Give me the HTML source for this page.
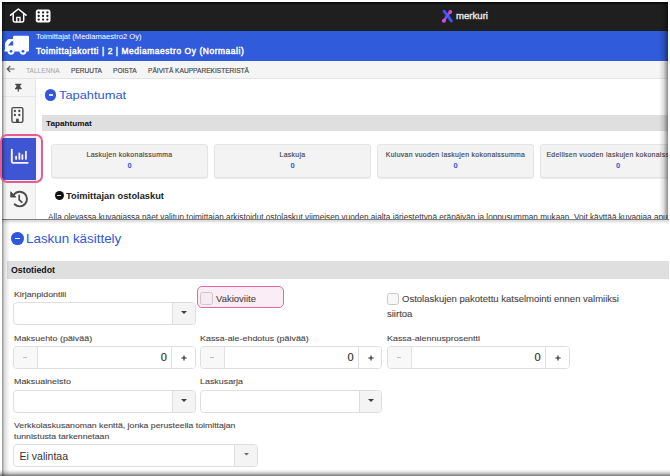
<!DOCTYPE html>
<html><head><meta charset="utf-8">
<style>
*{margin:0;padding:0;box-sizing:border-box}
html,body{width:670px;height:476px;overflow:hidden;background:#fff;font-family:"Liberation Sans",sans-serif;color:#333}
.a{position:absolute}
.t{position:absolute;white-space:nowrap;line-height:1}
#up{position:absolute;left:2px;top:2px;width:666px;height:217px;overflow:hidden;background:#fff}
#upi{position:absolute;left:-2px;top:-2px;width:700px;height:240px}
#lo{position:absolute;left:2px;top:219px;width:666.5px;height:257px;overflow:hidden;background:#fff}
#loi{position:absolute;left:-2px;top:-219px;width:700px;height:500px}
</style></head><body>

<div id="up"><div id="upi">
  <!-- dark top bar -->
  <div class="a" style="left:0;top:0;width:700px;height:31px;background:#1f1f1f"></div>
  <div class="a" style="left:0;top:2px;width:700px;height:1.6px;background:#0e0e0e"></div>
  <!-- home icon -->
  <svg class="a" style="left:0;top:0" width="60" height="31" viewBox="0 0 60 31">
    <path d="M10.6 15.2 L18.3 9 L26 15.2" fill="none" stroke="#fff" stroke-width="1.6" stroke-linecap="round" stroke-linejoin="round"/>
    <path d="M13.2 13.5 V20.6 Q13.2 22 14.6 22 H22.3 Q23.7 22 23.7 20.6 V13.5" fill="none" stroke="#fff" stroke-width="1.5" stroke-linejoin="round"/>
    <path d="M16.8 22 V17.4 H20 V22" fill="none" stroke="#fff" stroke-width="1.4"/>
    <rect x="35.8" y="9.6" width="14.7" height="12.8" rx="2.2" fill="#fff"/>
    <g fill="#1f1f1f">
      <circle cx="38.7" cy="12.4" r="1.15"/><circle cx="43.1" cy="12.4" r="1.15"/><circle cx="47.4" cy="12.4" r="1.15"/>
      <circle cx="38.7" cy="16" r="1.15"/><circle cx="43.1" cy="16" r="1.15"/><circle cx="47.4" cy="16" r="1.15"/>
      <circle cx="38.7" cy="19.6" r="1.15"/><circle cx="43.1" cy="19.6" r="1.15"/><circle cx="47.4" cy="19.6" r="1.15"/>
    </g>
  </svg>
  <!-- merkuri logo -->
  <svg class="a" style="left:430px;top:0" width="30" height="31" viewBox="430 0 30 31">
    <defs>
      <linearGradient id="gp" x1="450.5" y1="11" x2="443.5" y2="21.5" gradientUnits="userSpaceOnUse">
        <stop offset="0" stop-color="#e040e0"/><stop offset="0.3" stop-color="#7a50e8"/><stop offset="0.6" stop-color="#4a60f0"/><stop offset="1" stop-color="#e040e0"/>
      </linearGradient>
    </defs>
    <path d="M444 11.3 Q447.6 15.2 451.3 20.9" fill="none" stroke="#3757ee" stroke-width="3" stroke-linecap="round"/>
    <path d="M450.4 11.6 Q446.8 15.6 443.9 20.8" fill="none" stroke="url(#gp)" stroke-width="2.6" stroke-linecap="round"/>
    <circle cx="450.3" cy="11.9" r="1.9" fill="#df45dc"/>
    <circle cx="443.9" cy="20.7" r="2" fill="#df45dc"/>
  </svg>
  <div class="t" style="left:455.6px;top:10.8px;font-size:9.7px;color:#e6e6e6;transform:scaleX(0.99);transform-origin:0 0;-webkit-text-stroke:0.4px #e6e6e6">merkuri</div>

  <!-- blue header -->
  <div class="a" style="left:0;top:31px;width:700px;height:29.8px;background:#305bda"></div>
  <svg class="a" style="left:0;top:31px" width="34" height="29" viewBox="0 31 34 29">
    <rect x="13" y="35.8" width="16" height="15.6" rx="1" fill="#fff"/>
    <path d="M13.5 39 H9.2 Q8.2 39 7.5 39.7 L5.8 41.8 Q5 42.7 5 43.8 V49.8 L4.3 50.6 V51.4 H13.5 Z" fill="#fff"/>
    <path d="M8 45.4 L11.2 41.4 Q11.5 41.2 11.8 41.2 H13.2 V45.4 Z" fill="#305bda"/>
    <circle cx="11" cy="51.3" r="3.4" fill="#fff"/>
    <circle cx="23" cy="51.3" r="3.4" fill="#fff"/>
    <circle cx="11" cy="51.3" r="1.4" fill="#305bda"/>
    <circle cx="23" cy="51.3" r="1.4" fill="#305bda"/>
  </svg>
  <div class="t" style="left:36px;top:32.5px;font-size:7.6px;color:#fff">Toimittajat (Mediamaestro2 Oy)</div>
  <div class="t" style="left:36px;top:46.52px;font-size:8.37px;color:#fff;transform:scaleX(1.0);transform-origin:0 0;-webkit-text-stroke:0.45px #fff;letter-spacing:0.6px">Toimittajakortti | 2 | Mediamaestro Oy (Normaali)</div>

  <!-- toolbar -->
  <div class="a" style="left:0;top:60.8px;width:700px;height:18.2px;background:#f5f5f5;border-bottom:1px solid #e4e4e4"></div>
  <svg class="a" style="left:6px;top:65px" width="9" height="8" viewBox="0 0 9 8">
    <path d="M8.5 4 H1.2 M4.2 1 L1.2 4 L4.2 7" fill="none" stroke="#555" stroke-width="1.1"/>
  </svg>
  <div class="t" style="left:26px;top:68.2px;font-size:6.6px;color:#a3a3a3">TALLENNA</div>
  <div class="t" style="left:71px;top:68.2px;font-size:6.6px;color:#444;-webkit-text-stroke:0.15px #444">PERUUTA</div>
  <div class="t" style="left:113px;top:68.2px;font-size:6.6px;color:#444;-webkit-text-stroke:0.15px #444">POISTA</div>
  <div class="t" style="left:148px;top:68.2px;font-size:6.6px;color:#444;-webkit-text-stroke:0.15px #444">PÄIVITÄ KAUPPAREKISTERISTÄ</div>

  <!-- sidebar -->
  <div class="a" style="left:0;top:79px;width:36px;height:160px;background:#f5f5f5;border-right:1px solid #e6e6e6"></div>
  <div class="a" style="left:2px;top:96px;width:33px;height:1px;background:#e6e6e6"></div>
  <svg class="a" style="left:0;top:79px" width="36" height="20" viewBox="0 79 36 20">
    <path d="M15.2 83.8 H21.4 V85.1 H20.3 V86.9 L21.6 88.3 V89.2 H15 V88.3 L16.3 86.9 V85.1 H15.2 Z" fill="#4a4a4a"/>
    <rect x="17.7" y="89" width="1.2" height="2.6" fill="#4a4a4a"/>
  </svg>
  <svg class="a" style="left:0;top:100px" width="36" height="30" viewBox="0 100 36 30">
    <rect x="11.9" y="107.6" width="11" height="14.8" rx="1.6" fill="none" stroke="#4a4a4a" stroke-width="1.4"/>
    <g fill="#4a4a4a"><circle cx="14.9" cy="111" r="1.15"/><circle cx="19.3" cy="111" r="1.15"/><circle cx="14.9" cy="115" r="1.15"/><circle cx="19.3" cy="115" r="1.15"/>
    <path d="M16 122.6 V119.8 Q16 118.4 17.4 118.4 Q18.8 118.4 18.8 119.8 V122.6 Z"/></g>
  </svg>
  <!-- active item -->
    <div class="a" style="left:2px;top:137.6px;width:34px;height:42px;background:#3157d9"></div>
  <svg class="a" style="left:0;top:140px" width="36" height="30" viewBox="0 140 36 30">
    <path d="M11.8 149.6 V161 Q11.8 162.9 13.7 162.9 H27.6" fill="none" stroke="#fff" stroke-width="1.9" stroke-linecap="round"/>
    <g stroke="#fff" stroke-width="1.8" stroke-linecap="round"><path d="M16.1 156.6 V158.9"/><path d="M19.35 153.4 V158.9"/><path d="M22.4 155.1 V158.9"/><path d="M25.9 151.6 V158.9"/></g>
  </svg>
  <svg class="a" style="left:0;top:185px" width="36" height="30" viewBox="0 185 36 30">
    <path d="M14.6 204.3 A7.3 7.3 0 1 0 14.1 194.3" fill="none" stroke="#4a4a4a" stroke-width="1.9" stroke-linecap="round"/>
    <path d="M10.7 191.7 V197.1 H16 Z" fill="#4a4a4a" stroke="#4a4a4a" stroke-width="0.8" stroke-linejoin="round"/>
    <path d="M19.2 195.4 V199.8 L21.8 202.2" fill="none" stroke="#4a4a4a" stroke-width="1.7" stroke-linecap="round" stroke-linejoin="round"/>
  </svg>

  <!-- Tapahtumat heading -->
  <div class="a" style="left:45.15px;top:89.25px;width:11.3px;height:11.3px;border-radius:50%;background:#2f58de"></div>
  <div class="a" style="left:48.8px;top:94.2px;width:4.3px;height:1.4px;background:#dfe5fa"></div>
  <div class="t" style="left:59.3px;top:89.85px;font-size:10.8px;color:#3157d9;transform:scaleX(1.19);transform-origin:0 0">Tapahtumat</div>

  <div class="a" style="left:42px;top:115px;width:660px;height:16px;background:#dfdfdf"></div>
  <div class="t" style="left:45.5px;top:119.7px;font-size:7.8px;font-weight:700;color:#111;transform:scaleX(1.05);transform-origin:0 0">Tapahtumat</div>

  <!-- cards -->
  <div class="a" style="left:51px;top:143.5px;width:157px;height:34px;background:#f3f3f3;border:1px solid #e4e4e4;border-radius:3px;box-shadow:0 1px 1px rgba(0,0,0,.08)"></div>
  <div class="a" style="left:214px;top:143.5px;width:157px;height:34px;background:#f3f3f3;border:1px solid #e4e4e4;border-radius:3px;box-shadow:0 1px 1px rgba(0,0,0,.08)"></div>
  <div class="a" style="left:377px;top:143.5px;width:157px;height:34px;background:#f3f3f3;border:1px solid #e4e4e4;border-radius:3px;box-shadow:0 1px 1px rgba(0,0,0,.08)"></div>
  <div class="a" style="left:539.5px;top:143.5px;width:157px;height:34px;background:#f3f3f3;border:1px solid #e4e4e4;border-radius:3px;box-shadow:0 1px 1px rgba(0,0,0,.08)"></div>
  <div class="t" style="left:51px;width:157px;text-align:center;top:151.6px;font-size:6.9px;color:#4a4545;letter-spacing:0.3px;-webkit-text-stroke:0.15px #4a4545">Laskujen kokonaissumma</div>
  <div class="t" style="left:214px;width:157px;text-align:center;top:151.6px;font-size:6.9px;color:#4a4545;letter-spacing:0.3px;-webkit-text-stroke:0.15px #4a4545">Laskuja</div>
  <div class="t" style="left:377px;width:157px;text-align:center;top:151.6px;font-size:6.9px;color:#4a4545;letter-spacing:0.3px;-webkit-text-stroke:0.15px #4a4545">Kuluvan vuoden laskujen kokonaissumma</div>
  <div class="t" style="left:539.5px;width:157px;text-align:center;top:151.6px;font-size:6.9px;color:#4a4545;letter-spacing:0.3px;-webkit-text-stroke:0.15px #4a4545">Edellisen vuoden laskujen kokonaissumma</div>
  <div class="t" style="left:51px;width:157px;text-align:center;top:162px;font-size:7.5px;font-weight:700;color:#3157d9">0</div>
  <div class="t" style="left:214px;width:157px;text-align:center;top:162px;font-size:7.5px;font-weight:700;color:#3157d9">0</div>
  <div class="t" style="left:377px;width:157px;text-align:center;top:162px;font-size:7.5px;font-weight:700;color:#3157d9">0</div>
  <div class="t" style="left:539.5px;width:157px;text-align:center;top:162px;font-size:7.5px;font-weight:700;color:#3157d9">0</div>

  <!-- Toimittajan ostolaskut -->
  <div class="a" style="left:54.5px;top:191.2px;width:9px;height:9px;border-radius:50%;background:#111"></div>
  <div class="a" style="left:57.3px;top:195.3px;width:3.4px;height:1.1px;background:#ddd"></div>
  <div class="t" style="left:66px;top:192.37px;font-size:8.74px;font-weight:700;color:#222;transform:scaleX(1.064);transform-origin:0 0">Toimittajan ostolaskut</div>
  <div class="t" style="left:48px;top:212.9px;font-size:8.3px;color:#333;transform:scaleX(0.99);transform-origin:0 0">Alla olevassa kuvagiassa näet valitun toimittajan arkistoidut ostolaskut viimeisen vuoden ajalta järjestettynä eräpäivän ja loppusumman mukaan. Voit käyttää kuvagiaa apuna</div>

  <div class="a" style="left:659px;top:0;width:9px;height:240px;background:linear-gradient(90deg,rgba(0,0,0,0),rgba(0,0,0,.12) 50%,rgba(0,0,0,.45))"></div>
  <!-- left shadow line -->
  <div class="a" style="left:2px;top:0;width:5px;height:240px;background:linear-gradient(90deg,rgba(0,0,0,.45),rgba(0,0,0,.12) 45%,rgba(0,0,0,0))"></div>
</div></div>
<div class="a" style="left:-0.5px;top:134px;width:43px;height:48.6px;border:2.1px solid #e45c91;border-radius:7px;background:rgba(240,90,160,.07)"></div>
<!-- upper right shadow -->

<div id="lo"><div id="loi">
  <div class="a" style="left:10.85px;top:231.9px;width:12.8px;height:12.8px;border-radius:50%;background:#2f58de"></div>
  <div class="a" style="left:14.9px;top:237.6px;width:4.9px;height:1.5px;background:#eef1fc"></div>
  <div class="t" style="left:26px;top:232.2px;font-size:13.4px;color:#3157d9">Laskun käsittely</div>

  <div class="a" style="left:7px;top:261px;width:700px;height:18px;background:#dfdfdf"></div>
  <div class="t" style="left:11px;top:266px;font-size:8.8px;font-weight:700;color:#111">Ostotiedot</div>

  <div class="t" style="left:13.7px;top:290.6px;font-size:7.74px;color:#4a4545;transform:scaleX(1.136);transform-origin:0 0;-webkit-text-stroke:0.1px #4a4545">Kirjanpidontili</div>
  <div class="a" style="left:13px;top:302.3px;width:182.60px;height:23.1px;border:1px solid #dedede;border-radius:4px;background:#fff;overflow:hidden">
    <div class="a" style="right:0;top:0;width:22.4px;height:100%;background:#f4f4f4;border-left:1px solid #dedede"></div>
  </div>
  <svg class="a" style="left:181.40px;top:311.10px" width="6" height="3" viewBox="0 0 6 3"><path d="M0 0 H6 L3.0 3 Z" fill="#3d3d3d"/></svg>

  <div class="a" style="left:197px;top:285.9px;width:87.3px;height:22.5px;border:1.7px solid #e6679b;border-radius:5px;background:#fbedf6"></div>
  <div class="a" style="left:200px;top:292.2px;width:12.8px;height:12.6px;border:1px solid #cdc6c6;border-radius:2.5px;background:#f8eaf4"></div>
  <div class="t" style="left:215.5px;top:294.8px;font-size:8.55px;color:#4a4545;transform:scaleX(1.111);transform-origin:0 0;-webkit-text-stroke:0.1px #4a4545">Vakioviite</div>

  <div class="a" style="left:387.2px;top:292.5px;width:12px;height:12px;border:1px solid #c8c8c8;border-radius:2.5px;background:#f7f7f7"></div>
  <div class="t" style="left:402px;top:294.8px;font-size:8.55px;color:#4a4545;transform:scaleX(1.111);transform-origin:0 0;-webkit-text-stroke:0.1px #4a4545">Ostolaskujen pakotettu katselmointi ennen valmiiksi</div>
  <div class="t" style="left:387px;top:309.8px;font-size:8.55px;color:#4a4545;transform:scaleX(1.111);transform-origin:0 0;-webkit-text-stroke:0.1px #4a4545">siirtoa</div>

  <div class="t" style="left:13.7px;top:334.66px;font-size:7.83px;color:#4a4545;transform:scaleX(1.136);transform-origin:0 0;-webkit-text-stroke:0.1px #4a4545">Maksuehto (päivää)</div>
  <div class="t" style="left:200.4px;top:334.66px;font-size:7.83px;color:#4a4545;transform:scaleX(1.136);transform-origin:0 0;-webkit-text-stroke:0.1px #4a4545">Kassa-ale-ehdotus (päivää)</div>
  <div class="t" style="left:387.2px;top:334.66px;font-size:7.83px;color:#4a4545;transform:scaleX(1.136);transform-origin:0 0;-webkit-text-stroke:0.1px #4a4545">Kassa-alennusprosentti</div>

  <!-- number fields -->
  <div class="a" style="left:13px;top:346.2px;width:182.80px;height:22.8px;border:1px solid #dedede;border-radius:4px;background:#fff;overflow:hidden">
    <div class="a" style="left:0;top:0;width:23.5px;height:100%;background:#f8f8f8;border-right:1px solid #e2e2e2"></div>
    <div class="a" style="right:0;top:0;width:23.4px;height:100%;background:#fff;border-left:1px solid #e0e0e0"></div>
  </div>
  <div class="a" style="left:23.05px;top:356.85px;width:4.4px;height:1.1px;background:#bdbdbd"></div>
  <div class="t" style="left:136.80px;width:30px;text-align:right;top:352.09px;font-size:11px;color:#2a2a2a;-webkit-text-stroke:0.15px #2a2a2a">0</div>
  <svg class="a" style="left:181.20px;top:354.75px" width="6" height="6" viewBox="0 0 6 6"><path d="M3 0.4 V5.6 M0.4 3 H5.6" stroke="#222" stroke-width="1.1"/></svg>
  <div class="a" style="left:200.4px;top:346.2px;width:182.10px;height:22.8px;border:1px solid #dedede;border-radius:4px;background:#fff;overflow:hidden">
    <div class="a" style="left:0;top:0;width:23.5px;height:100%;background:#f8f8f8;border-right:1px solid #e2e2e2"></div>
    <div class="a" style="right:0;top:0;width:23.4px;height:100%;background:#fff;border-left:1px solid #e0e0e0"></div>
  </div>
  <div class="a" style="left:209.95px;top:356.85px;width:4.4px;height:1.1px;background:#bdbdbd"></div>
  <div class="t" style="left:323.50px;width:30px;text-align:right;top:352.09px;font-size:11px;color:#2a2a2a;-webkit-text-stroke:0.15px #2a2a2a">0</div>
  <svg class="a" style="left:367.90px;top:354.75px" width="6" height="6" viewBox="0 0 6 6"><path d="M3 0.4 V5.6 M0.4 3 H5.6" stroke="#222" stroke-width="1.1"/></svg>
  <div class="a" style="left:387.2px;top:346.2px;width:182.40px;height:22.8px;border:1px solid #dedede;border-radius:4px;background:#fff;overflow:hidden">
    <div class="a" style="left:0;top:0;width:23.5px;height:100%;background:#f8f8f8;border-right:1px solid #e2e2e2"></div>
    <div class="a" style="right:0;top:0;width:23.4px;height:100%;background:#fff;border-left:1px solid #e0e0e0"></div>
  </div>
  <div class="a" style="left:396.75px;top:356.85px;width:4.4px;height:1.1px;background:#bdbdbd"></div>
  <div class="t" style="left:510.60px;width:30px;text-align:right;top:352.09px;font-size:11px;color:#2a2a2a;-webkit-text-stroke:0.15px #2a2a2a">0</div>
  <svg class="a" style="left:555.00px;top:354.75px" width="6" height="6" viewBox="0 0 6 6"><path d="M3 0.4 V5.6 M0.4 3 H5.6" stroke="#222" stroke-width="1.1"/></svg>

  <div class="t" style="left:13.7px;top:378.16px;font-size:7.83px;color:#4a4545;transform:scaleX(1.136);transform-origin:0 0;-webkit-text-stroke:0.1px #4a4545">Maksuaineisto</div>
  <div class="t" style="left:200.4px;top:378.16px;font-size:7.83px;color:#4a4545;transform:scaleX(1.136);transform-origin:0 0;-webkit-text-stroke:0.1px #4a4545">Laskusarja</div>
  <div class="a" style="left:13px;top:390.1px;width:182.60px;height:23px;border:1px solid #dedede;border-radius:4px;background:#fff;overflow:hidden">
    <div class="a" style="right:0;top:0;width:22.4px;height:100%;background:#f4f4f4;border-left:1px solid #dedede"></div>
  </div>
  <svg class="a" style="left:181.40px;top:398.85px" width="6" height="3" viewBox="0 0 6 3"><path d="M0 0 H6 L3.0 3 Z" fill="#3d3d3d"/></svg>
  <div class="a" style="left:200.4px;top:390.1px;width:182.10px;height:23px;border:1px solid #dedede;border-radius:4px;background:#fff;overflow:hidden">
    <div class="a" style="right:0;top:0;width:22.4px;height:100%;background:#f4f4f4;border-left:1px solid #dedede"></div>
  </div>
  <svg class="a" style="left:368.30px;top:398.85px" width="6" height="3" viewBox="0 0 6 3"><path d="M0 0 H6 L3.0 3 Z" fill="#3d3d3d"/></svg>

  <div class="t" style="left:13.7px;top:422.43px;font-size:7.66px;color:#4a4545;transform:scaleX(1.136);transform-origin:0 0;-webkit-text-stroke:0.1px #4a4545">Verkkolaskusanoman kenttä, jonka perusteella toimittajan</div>
  <div class="t" style="left:13.7px;top:433.18px;font-size:7.66px;color:#4a4545;transform:scaleX(1.136);transform-origin:0 0;-webkit-text-stroke:0.1px #4a4545">tunnistusta tarkennetaan</div>
  <div class="a" style="left:13px;top:444.2px;width:245.00px;height:22.8px;border:1px solid #dedede;border-radius:4px;background:#fff;overflow:hidden">
    <div class="a" style="right:0;top:0;width:23.5px;height:100%;background:#f4f4f4;border-left:1px solid #dedede"></div>
  </div>
  <svg class="a" style="left:243.75px;top:453.45px" width="5" height="2.6" viewBox="0 0 5 2.6"><path d="M0 0 H5 L2.5 2.6 Z" fill="#6a6a6a"/></svg>
  <div class="t" style="left:19.6px;top:450.9px;font-size:10.5px;color:#333">Ei valintaa</div>

  <!-- top shadow -->
  <div class="a" style="left:0;top:219px;width:700px;height:1px;background:rgba(0,0,0,.5)"></div>
  <div class="a" style="left:0;top:220px;width:700px;height:4px;background:linear-gradient(180deg,rgba(0,0,0,.16),rgba(0,0,0,0))"></div>
  <!-- left shadow -->
  <div class="a" style="left:2px;top:219px;width:8px;height:260px;background:linear-gradient(90deg,rgba(0,0,0,.42),rgba(0,0,0,.12) 35%,rgba(0,0,0,0))"></div>
</div></div>
<!-- bottom shadow -->
<div class="a" style="left:0;top:468.5px;width:670px;height:7.5px;background:linear-gradient(180deg,rgba(0,0,0,0),rgba(0,0,0,.06) 30%,rgba(0,0,0,.28) 70%,rgba(0,0,0,.55))"></div>
</body></html>
